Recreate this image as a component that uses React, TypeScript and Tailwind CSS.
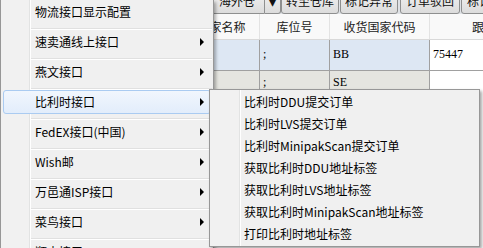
import React from 'react';

const mainItems = [
  { label: '物流接口显示配置', sub: false },
  { label: '速卖通线上接口', sub: true },
  { label: '燕文接口', sub: true },
  { label: '比利时接口', sub: true, active: true },
  { label: 'FedEX接口(中国)', sub: true },
  { label: 'Wish邮', sub: true },
  { label: '万邑通ISP接口', sub: true },
  { label: '菜鸟接口', sub: true },
  { label: '顺丰接口', sub: true },
];

const subItems = [
  '比利时DDU提交订单',
  '比利时LVS提交订单',
  '比利时MinipakScan提交订单',
  '获取比利时DDU地址标签',
  '获取比利时LVS地址标签',
  '获取比利时MinipakScan地址标签',
  '打印比利时地址标签',
];

const Arrow = () => (
  <span className="w-0 h-0 border-t-[4px] border-b-[4px] border-l-[4px] border-t-transparent border-b-transparent border-l-black" />
);

const ToolButton: React.FC<{ label: string; className?: string }> = ({ label, className }) => (
  <div
    className={`h-[26px] shrink-0 flex items-center justify-center border border-[#8e8f8f] rounded-[3px] bg-gradient-to-b from-[#f4f4f4] to-[#dcdcdc] text-[12px] text-[#111] ${className ?? ''}`}
  >
    {label}
  </div>
);

const App: React.FC = () => {
  return (
    <div className="w-[483px] h-[248px] relative overflow-hidden bg-white font-['Noto_Sans_CJK_SC',sans-serif]">
      {/* window behind the menus */}
      <div className="flex flex-col">
        {/* toolbar */}
        <div className="h-[14px] flex items-end bg-[#dfe2e6] pl-[209px] gap-0">
          <ToolButton label="海外仓" className="w-[56px] rounded-r-none" />
          <ToolButton label="▾" className="w-[16px] rounded-l-none border-l-0 text-[14px]" />
          <ToolButton label="转至仓库" className="w-[58px] ml-[0px]" />
          <ToolButton label="标记异常" className="w-[58px] ml-[1px]" />
          <ToolButton label="订单驳回" className="w-[60px] ml-[2px]" />
          <ToolButton label="标记发货" className="w-[60px] ml-[1px]" />
        </div>

        {/* table header */}
        <div className="h-[26px] flex pl-[184px] bg-[#f9f9f9] border-b border-[#d9d9d9] text-[12px] text-[#222]">
          <div className="w-[76px] shrink-0 flex items-center justify-center border-r border-[#e3e3e3]">国家名称</div>
          <div className="w-[70px] shrink-0 flex items-center justify-center border-r border-[#e3e3e3]">库位号</div>
          <div className="w-[100px] shrink-0 flex items-center justify-center border-r border-[#e3e3e3]">收货国家代码</div>
          <div className="w-[120px] shrink-0 flex items-center justify-center">跟踪号</div>
        </div>

        {/* rows */}
        <div className="h-[31px] flex pl-[184px] border-b border-[#a0a0a0] text-[12px] font-['Liberation_Serif',serif] text-black">
          <div className="w-[76px] shrink-0 bg-[#dde7f3] border-r border-[#a0a0a0]" />
          <div className="w-[70px] shrink-0 bg-[#dde7f3] border-r border-[#a0a0a0] pl-[3px] pt-[5px]">;</div>
          <div className="w-[100px] shrink-0 bg-[#dde7f3] border-r border-[#a0a0a0] pl-[3px] pt-[5px]">BB</div>
          <div className="w-[120px] shrink-0 bg-white pl-[3px] pt-[5px]">75447</div>
        </div>
        <div className="h-[30px] flex pl-[184px] text-[12px] font-['Liberation_Serif',serif] text-black">
          <div className="w-[76px] shrink-0 bg-[#e5e5e0] border-r border-[#a0a0a0]" />
          <div className="w-[70px] shrink-0 bg-[#e5e5e0] border-r border-[#a0a0a0] pl-[3px] pt-[2px]">;</div>
          <div className="w-[100px] shrink-0 bg-[#e5e5e0] border-r border-[#a0a0a0] pl-[3px] pt-[2px]">SE</div>
          <div className="w-[120px] shrink-0 bg-white" />
        </div>
      </div>

      {/* main context menu */}
      <div className="absolute left-0 top-0 w-[214px] h-[270px] border-l border-r border-[#979797] shadow-[2px_2px_3px_rgba(0,0,0,0.3)] bg-[linear-gradient(to_right,#f1f1f1_28px,#e2e3e3_28px,#e2e3e3_29px,#ffffff_29px,#ffffff_30px,#f0f0f0_30px)] text-[12px] text-black">
        {mainItems.map((item, i) => (
          <div key={item.label}>
            <div
              className={`h-[24px] mx-[2px] flex items-center justify-between pl-[31px] pr-[6px] rounded-[3px] border ${
                item.active
                  ? 'border-[#aacbf1] bg-gradient-to-b from-[#f1f6fd] to-[#e2edfb]'
                  : 'border-transparent'
              }`}
            >
              <span>{item.label}</span>
              {item.sub && <Arrow />}
            </div>
            {i < mainItems.length - 1 && (
              <div className="h-[6px] pt-[4px] ml-[30px] mr-[1px]">
                <div className="h-px bg-[#e0e0e0]" />
                <div className="h-px bg-white" />
              </div>
            )}
          </div>
        ))}
      </div>

      {/* sub menu */}
      <div className="absolute left-[209px] top-[89px] w-[271px] border border-[#979797] shadow-[2px_2px_3px_rgba(0,0,0,0.35)] py-[1px] bg-[linear-gradient(to_right,#f1f1f1_29px,#e2e3e3_29px,#e2e3e3_30px,#ffffff_30px,#ffffff_31px,#f0f0f0_31px)] text-[12px] text-black">
        {subItems.map((label) => (
          <div key={label} className="h-[22px] mx-[2px] flex items-center pl-[32px]">
            {label}
          </div>
        ))}
      </div>
    </div>
  );
};

export default App;
